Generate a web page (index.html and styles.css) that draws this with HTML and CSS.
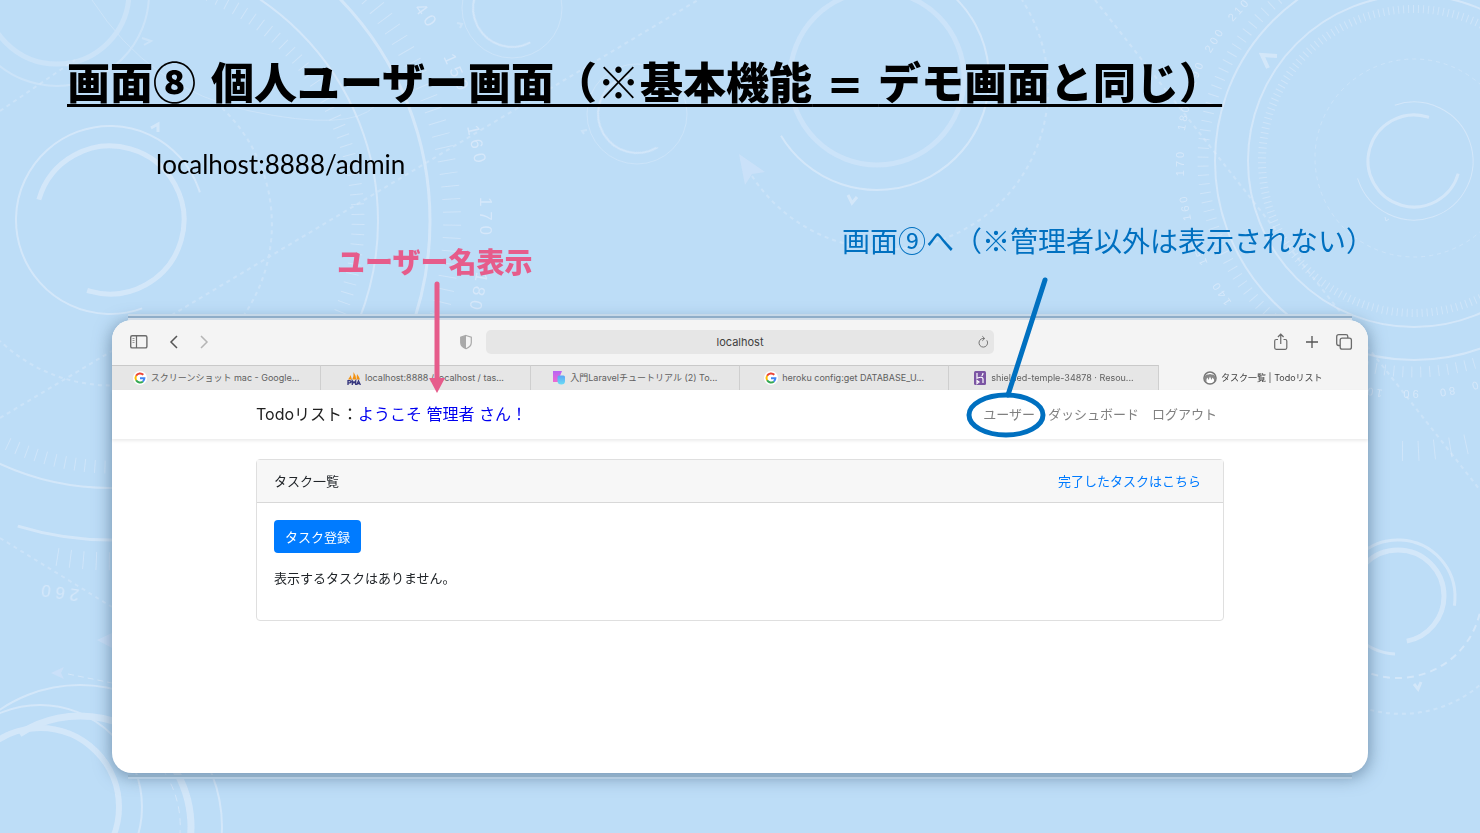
FILE: index.html
```html
<!DOCTYPE html>
<html lang="ja">
<head>
<meta charset="utf-8">
<meta name="viewport" content="width=device-width, initial-scale=1">
<title>画面⑧ 個人ユーザー画面</title>
<link rel="stylesheet" href="styles.css">
</head>
<body>
<main class="slide">
  <svg class="backdrop" viewBox="0 0 1480 833" preserveAspectRatio="xMidYMid slice" aria-hidden="true">
    <g class="faint">
      <circle cx="57" cy="-6" r="92" stroke-width="2"/>
      <circle cx="57" cy="-8" r="72" stroke-width="5"/>
      <path d="M92 0Q150 90 250 111T375 106" stroke-width="1"/>
      <circle cx="512" cy="8" r="50" stroke-width="1"/>
      <circle cx="637" cy="114" r="50" stroke-width="1"/>
      <circle cx="877" cy="78" r="87" stroke-width="5"/>
      <path d="M460 28L462 24L457 23M142 38L151 41L144 45M584 134L582 131L587 130" stroke-width="2"/>
    </g>
    <g class="dots">
      <path d="M0 111L75 60M0 418L698 0M0 538L112 607M1095 0L1480 490"/>
      <path d="M222 108A160 160 0 0 1 0 341M752 176A158 158 0 0 0 1022 0"/>
      <circle cx="1414" cy="158" r="99" stroke-width="1"/>
      <path d="M1300 660A122 122 0 0 0 1480 685"/>
    </g>
    <g class="line">
      <circle cx="110" cy="220" r="94" stroke-width="2" pathLength="360" stroke-dasharray="273 87" transform="rotate(70 110 220)"/>
      <circle cx="110" cy="220" r="74" stroke-width="5" pathLength="360" stroke-dasharray="272 88" transform="rotate(196 110 220)"/>
      <circle cx="111" cy="221" r="267" stroke-width="2" pathLength="360" stroke-dasharray="210 150" transform="rotate(-90 111 221)"/>
      <circle cx="111" cy="221" r="319" stroke-width="3" pathLength="360" stroke-dasharray="197 163" transform="rotate(-90 111 221)"/>
      <path d="M151 128L158 124L158 132" stroke-width="3"/>
      <circle cx="512" cy="8" r="39" stroke-width="2" pathLength="360" stroke-dasharray="200 160" transform="rotate(62 512 8)"/>
      <circle cx="637" cy="114" r="39" stroke-width="2" pathLength="360" stroke-dasharray="200 160" transform="rotate(59 637 114)"/>
      <circle cx="877" cy="78" r="112" stroke-width="2" pathLength="360" stroke-dasharray="199 161" transform="rotate(-50 877 78)"/>
      <path d="M848 195L852 203L857 197" stroke-width="3"/>
      <circle cx="1414" cy="161" r="199" stroke-width="2"/>
      <circle cx="1414" cy="161" r="166" stroke-width="2"/>
      <circle cx="1414" cy="161" r="59" stroke-width="1" pathLength="360" stroke-dasharray="272 88" transform="rotate(251 1414 161)"/>
      <circle cx="1414" cy="161" r="46" stroke-width="3" pathLength="360" stroke-dasharray="273 87" transform="rotate(16 1414 161)"/>
      <path d="M1277 56L1262 55L1268 68" stroke-width="4"/>
      <path d="M1385 217L1386 221L1389 219" stroke-width="1"/>
      <circle cx="1398" cy="597" r="57" stroke-width="3" pathLength="360" stroke-dasharray="276 84" transform="rotate(93 1398 597)"/>
      <circle cx="1398" cy="596" r="46" stroke-width="5" pathLength="360" stroke-dasharray="259 101" transform="rotate(180 1398 596)"/>
      <path d="M1350 663A84 84 0 0 0 1480 612" stroke-width="2" stroke-dasharray="7 5"/>
      <path d="M1414 684L1418 689L1421 682" stroke-width="3"/>
      <circle cx="40" cy="807" r="79" stroke-width="6"/>
      <circle cx="40" cy="807" r="102" stroke-width="2"/>
      <circle cx="80" cy="827" r="142" stroke-width="2"/>
      <circle cx="80" cy="827" r="111" stroke-width="7" pathLength="360" stroke-dasharray="150 210" transform="rotate(237 80 827)"/>
      <path d="M165 773A100 100 0 0 1 180 833" stroke-width="1" stroke-dasharray="7 5"/>
      <path d="M68 674L112 683" stroke-width="1" stroke-dasharray="6 4"/>
    </g>
    <g class="ticks">
      <path d="M111 -25A246 246 0 1 1 0 440" stroke-width="13" stroke-dasharray="1 9"/>
      <path d="M300 -62A340 340 0 0 1 52 556" stroke-width="18" stroke-dasharray="1 12"/>
      <circle cx="1414" cy="161" r="211" stroke-width="11" stroke-dasharray="1 8"/>
      <circle cx="1414" cy="161" r="152" stroke-width="8" stroke-dasharray="1 4"/>
      <path d="M1402 451A290 290 0 0 0 1480 441" stroke-width="20" stroke-dasharray="1 15"/>
    </g>
    <g class="arrowheads">
      <path d="M739 154L765 172L752 174L745 185Z"/>
      <path d="M51 673L64 667L61 673L64 679Z"/>
      <path d="M97 640L112 633V648Z"/>
    </g>
    <g class="dial dial-large">
      <text transform="translate(421 18) rotate(54)">4 0</text>
      <text transform="translate(451 74) rotate(66)">1 5 0</text>
      <text transform="translate(471 145) rotate(78)">1 6 0</text>
      <text transform="translate(480 216) rotate(90)">1 7 0</text>
      <text transform="translate(473 290) rotate(101)">1 8 0</text>
      <text transform="translate(61 587) rotate(188)">2 6 0</text>
    </g>
    <g class="dial dial-small">
      <text transform="translate(1241 13) rotate(-48)">2 1 0</text>
      <text transform="translate(1217 43) rotate(-58)">2 0 0</text>
      <text transform="translate(1199 76) rotate(-68)">1 9 0</text>
      <text transform="translate(1187 119) rotate(-79)">1 8 0</text>
      <text transform="translate(1184 164) rotate(-90)">1 7 0</text>
      <text transform="translate(1189 208) rotate(-101)">1 6 0</text>
      <text transform="translate(1203 252) rotate(-113)">1 5 0</text>
      <text transform="translate(1225 292) rotate(-124)">1 4 0</text>
      <text transform="translate(1371 388) rotate(-170)">1 0 0</text>
      <text transform="translate(1411 390) rotate(180)">9 0</text>
      <text transform="translate(1447 388) rotate(171)">8 0</text>
      <text transform="translate(1474 382) rotate(162)">0</text>
    </g>
  </svg>

  <header class="heading">
    <h1 class="title">画面⑧<span class="latin"> </span>個人ユーザー画面（※基本機能<span class="latin"> = </span>デモ画面と同じ）</h1>
    <p class="address-note">localhost:8888/admin</p>
  </header>

  <div class="callouts">
    <p class="callout callout-pink">ユーザー名表示
      <svg class="pointer" viewBox="0 0 16 112" aria-hidden="true"><path d="M8 3V98" stroke="#e65c8b" stroke-width="5" stroke-linecap="round"/><path d="M0 97H16L8 112Z" fill="#e65c8b"/></svg>
    </p>
    <p class="callout callout-blue">画面⑨へ（※管理者以外は表示されない）</p>
  </div>

  <section class="window">
    <div class="toolbar">
      <div class="tools tools-left">
        <button class="tool" aria-label="サイドバー"><svg width="20" height="16" viewBox="0 0 20 16"><g fill="none" stroke="#6b6b6b"><rect x="1.7" y="1.7" width="16.2" height="12.2" rx="1.5" stroke-width="1.4"/><path d="M7.5 2v12" stroke-width="1.2"/><path d="M3.5 4.5h2M3.5 6.5h2M3.5 8.500h2" stroke="#999"/></g></svg></button>
        <button class="tool" aria-label="戻る"><svg width="10" height="16" viewBox="0 0 10 16"><path d="M8 2L2 8L8 14" fill="none" stroke="#555" stroke-width="1.5"/></svg></button>
        <button class="tool" aria-label="進む"><svg width="10" height="16" viewBox="0 0 10 16"><path d="M2 2L8 8L2 14" fill="none" stroke="#b5b5b5" stroke-width="1.5"/></svg></button>
        <button class="tool tool-shield" aria-label="プライバシーレポート"><svg width="14" height="16" viewBox="0 0 14 16"><path d="M7 1.500L12.300 3.300V8.500C12.300 11.500 10 13.500 7 14.700C4 13.500 1.700 11.500 1.700 8.500V3.300Z" fill="none" stroke="#a9a9a9" stroke-width="1.200"/><path d="M7 1.500V14.700C4 13.500 1.700 11.500 1.700 8.500V3.300Z" fill="#a9a9a9"/></svg></button>
      </div>
      <div class="address">
        <input class="address-input" type="text" value="localhost" aria-label="アドレス">
        <button class="reload" aria-label="再読み込み"><svg width="12" height="14" viewBox="0 0 12 14"><path d="M9.800 5.300A4.300 4.300 0 1 1 6 3.500H7.500M5.300 1.200L7.700 3.500L5.300 5.800" fill="none" stroke="#777"/></svg></button>
      </div>
      <div class="tools tools-right">
        <button class="tool" aria-label="共有"><svg width="16" height="18" viewBox="0 0 16 18"><path d="M5 6.500H3.200Q1.700 6.500 1.700 8V14.800Q1.700 16.300 3.200 16.300H12.300Q13.800 16.300 13.800 14.800V8Q13.800 6.500 12.300 6.500H10.500M7.750 11V1.500M4.900 4L7.750 1.200L10.600 4" fill="none" stroke="#6b6b6b" stroke-width="1.200"/></svg></button>
        <button class="tool" aria-label="新規タブ"><svg width="14" height="14" viewBox="0 0 14 14"><path d="M7 1V13M1 7H13" stroke="#555" stroke-width="1.300"/></svg></button>
        <button class="tool" aria-label="タブの概要"><svg width="18" height="18" viewBox="0 0 18 18"><g fill="none" stroke="#6b6b6b" stroke-width="1.300"><rect x="5.200" y="5.200" width="11.200" height="11" rx="2"/><path d="M5 12.500H3.700Q1.700 12.500 1.700 10.500V3.700Q1.700 1.700 3.700 1.700H11Q12.800 1.700 12.800 3.500V5"/></g></svg></button>
      </div>
    </div>

    <div class="tabs">
      <button class="tab"><svg class="favicon" viewBox="0 0 14 14"><circle cx="7" cy="7" r="7" fill="#fff"/><g fill="none" stroke-width="2"><path d="M10.300 3.800A4.500 4.500 0 0 0 3.100 4.800" stroke="#ea4335"/><path d="M3.100 4.800A4.500 4.500 0 0 0 3.100 9.300" stroke="#fbbc05"/><path d="M3.100 9.300A4.500 4.500 0 0 0 9.900 10.400" stroke="#34a853"/><path d="M9.900 10.400A4.500 4.500 0 0 0 11.400 7.200H7" stroke="#4285f4"/></g></svg><span class="tab-label">スクリーンショット mac - Google...</span></button>
      <button class="tab"><svg class="favicon" viewBox="0 0 14 14"><path d="M1 8.500Q3 6.500 3.500 4L5 8.500ZM5.300 8.500Q7 5 6.500 1Q9 4.500 9.200 8.500ZM9.500 8.500L10 3Q12 5.500 13 8.500Z" fill="#f29111"/><g fill="none" stroke="#34347c" stroke-width="1.300"><path d="M1 14V9.700H2.800Q4 9.700 4 10.700T2.800 11.800H1M5.300 14V9.800L7 12L8.700 9.800V14M9.700 14L11.500 9.800L13.400 14M10.300 12.700H13"/></g></svg><span class="tab-label">localhost:8888 / localhost / tas...</span></button>
      <button class="tab"><svg class="favicon" viewBox="0 0 14 14"><defs><linearGradient id="pink" x2="0" y2="1"><stop stop-color="#b666f5"/><stop offset="1" stop-color="#f06ad0"/></linearGradient><linearGradient id="sky" x2="0" y2="1"><stop stop-color="#5ba5f5"/><stop offset="1" stop-color="#6adcf5"/></linearGradient></defs><path d="M1 0H10L8 5V11H1Z" fill="url(#pink)"/><path d="M5.500 6Q5.500 4.500 7 4.500H11.500Q13 4.500 13 6V10Q13 13.500 9.300 13.500T5.500 10Z" fill="url(#sky)"/></svg><span class="tab-label">入門Laravelチュートリアル (2) To...</span></button>
      <button class="tab"><svg class="favicon" viewBox="0 0 14 14"><circle cx="7" cy="7" r="7" fill="#fff"/><g fill="none" stroke-width="2"><path d="M10.300 3.800A4.500 4.500 0 0 0 3.100 4.800" stroke="#ea4335"/><path d="M3.100 4.800A4.500 4.500 0 0 0 3.100 9.300" stroke="#fbbc05"/><path d="M3.100 9.300A4.500 4.500 0 0 0 9.900 10.400" stroke="#34a853"/><path d="M9.900 10.400A4.500 4.500 0 0 0 11.400 7.200H7" stroke="#4285f4"/></g></svg><span class="tab-label">heroku config:get DATABASE_U...</span></button>
      <button class="tab"><svg class="favicon" viewBox="0 0 14 14"><rect x="1" width="12" height="14" rx="1.500" fill="#7b55a3"/><path d="M4 2V7.200Q10 5 10 8V12M10 2Q10 3.500 8.800 5M4 9.500L6 11L4 12.500Z" fill="none" stroke="#fff" stroke-width="1.200"/></svg><span class="tab-label">shielded-temple-34878 · Resou...</span></button>
      <button class="tab tab-active"><svg class="favicon" viewBox="0 0 14 14"><circle cx="7" cy="7" r="6" fill="#fff" stroke="#777" stroke-width="1.600"/><path d="M1.500 9Q1 3 5.500 3.500Q7 2.500 8.500 3.500Q13 3 12.500 9L11 11V8.500L9.500 6.500L8.500 9L7 5.500L5.500 9L4.500 6.500L3.500 8V11Z" fill="#888"/></svg><span class="tab-label">タスク一覧 | Todoリスト</span></button>
    </div>

    <div class="page">
      <nav class="navbar">
        <div class="container navbar-row">
          <p class="brand">Todoリスト：<a class="welcome" href="#">ようこそ 管理者 さん！</a></p>
          <div class="nav-links">
            <a class="nav-link nav-user" href="#">ユーザー<svg class="ring" viewBox="0 0 82 162" aria-hidden="true"><g fill="none" stroke="#0070c0" stroke-width="5"><ellipse cx="40" cy="138" rx="37" ry="20"/><path d="M79 3L42 118" stroke-linecap="round"/></g></svg></a>
            <a class="nav-link" href="#">ダッシュボード</a>
            <a class="nav-link" href="#">ログアウト</a>
          </div>
        </div>
      </nav>
      <div class="container content">
        <article class="card">
          <div class="card-header">
            <h2 class="card-title">タスク一覧</h2>
            <a class="card-link" href="#">完了したタスクはこちら</a>
          </div>
          <div class="card-body">
            <button class="primary">タスク登録</button>
            <p class="empty">表示するタスクはありません。</p>
          </div>
        </article>
      </div>
    </div>
  </section>
</main>
</body>
</html>
```

FILE: styles.css
```css
* {
  box-sizing: border-box;
}

body {
  margin: 0;
  font-family: "Noto Sans CJK JP", sans-serif;
  color: #212529;
}

h1, h2, p {
  margin: 0;
}

button {
  border: 0;
  padding: 0;
  background: none;
  font: inherit;
  color: inherit;
}

a {
  text-decoration: none;
}

svg {
  display: block;
}

.slide {
  position: relative;
  display: flex;
  flex-direction: column;
  min-height: 100vh;
  padding: 50px 112px 60px;
  background: #bdddf7;
  overflow: hidden;
}

/* Decorative dials behind the slide */
.backdrop {
  position: absolute;
  inset: 0;
  width: 100%;
  height: 100%;
}

.backdrop g {
  fill: none;
  stroke: #e6effc;
}

.backdrop .faint {
  opacity: 0.35;
}

.backdrop .line {
  opacity: 0.55;
}

.backdrop .ticks {
  opacity: 0.45;
}

.backdrop .dots {
  opacity: 0.35;
  stroke-width: 2px;
  stroke-dasharray: 4 4;
}

.backdrop .arrowheads {
  fill: #d0e2fa;
  stroke: none;
  opacity: 0.7;
}

.backdrop .dial {
  fill: #e6effc;
  stroke: none;
  opacity: 0.6;
  font-family: "Liberation Sans", sans-serif;
  text-anchor: middle;
}

.dial-large {
  font-size: 17px;
}

.dial-small {
  font-size: 11px;
}

.heading,
.callouts,
.window {
  position: relative;
}

.heading {
  margin: 0 -45px;
}

.title {
  font-size: 43px;
  line-height: 60px;
  font-weight: 900;
  color: #000;
  text-decoration: underline;
  text-decoration-thickness: 3px;
  text-underline-offset: 5px;
  text-decoration-skip-ink: none;
}

.latin {
  font-family: "DejaVu Sans", sans-serif;
  font-weight: 700;
  line-height: 1;
}

.address-note {
  margin: 38px 0 0 89px;
  font-family: Lato, sans-serif;
  font-size: 26px;
  line-height: 32px;
  color: #000;
}

.callouts {
  z-index: 1;
  display: flex;
  align-items: flex-start;
  justify-content: space-between;
  margin: 40px -6px 39px 225px;
  font-size: 28px;
  line-height: 40px;
}

.callout-pink {
  position: relative;
  margin-top: 21px;
  font-weight: 900;
  color: #e65c8b;
}

.pointer {
  position: absolute;
  left: 92px;
  top: 100%;
  width: 16px;
  height: 112px;
}

.callout-blue {
  color: #0070c0;
}

/* Browser window */
.window {
  flex: 1;
  display: flex;
  flex-direction: column;
  border-radius: 20px;
  background: #fff;
  box-shadow: 0 3px 18px rgba(50, 80, 110, 0.6);
}

.window::before,
.window::after {
  content: "";
  position: absolute;
  left: 16px;
  right: 16px;
  height: 2px;
}

.window::before {
  top: -4px;
  background: #8fadc8;
  box-shadow: 0 -2px #c6d8e8, 0 2px #d3dee9;
}

.window::after {
  bottom: -4px;
  background: #8fadc5;
  box-shadow: 0 2px #b3cbe0;
}

.toolbar {
  display: grid;
  grid-template-columns: 1fr minmax(0, 508px) 1fr;
  align-items: center;
  height: 45px;
  padding-bottom: 1px;
  border-radius: 20px 20px 0 0;
  background: #f4f4f4;
}

.tools {
  display: flex;
  align-items: center;
}

.tools-left {
  gap: 20px;
  padding: 0 13px 0 17px;
}

.tool-shield {
  margin-left: auto;
}

.tools-right {
  gap: 16px;
  justify-content: flex-end;
  padding-right: 15px;
}

.address {
  display: flex;
  align-items: center;
  height: 24px;
  padding: 0 5px;
  border-radius: 5px;
  background: #e6e6e6;
}

.address-input {
  flex: 1;
  min-width: 0;
  padding: 0 0 0 12px;
  border: 0;
  background: none;
  font-family: Inter, sans-serif;
  font-size: 11px;
  text-align: center;
  color: #404040;
}

.tabs {
  display: grid;
  grid-template-columns: repeat(6, minmax(0, 1fr));
  height: 25px;
  background: #f4f4f4;
}

.tab {
  display: flex;
  align-items: center;
  justify-content: center;
  gap: 4px;
  border-top: 1px solid #c9c9c9;
  border-right: 1px solid #cfcfcf;
  background: #e6e6e6;
  font-family: Inter, "Noto Sans CJK JP", sans-serif;
  font-size: 9px;
  line-height: 16px;
  white-space: nowrap;
  color: #606060;
}

.tab-active {
  border-color: transparent;
  background: #f4f4f4;
  color: #404040;
}

.favicon {
  flex: none;
  width: 14px;
  height: 14px;
}

.container {
  width: 100%;
  max-width: 968px;
  margin: 0 auto;
}

.navbar {
  height: 49px;
  background: #fff;
  box-shadow: 0 2px 3px rgba(0, 0, 0, 0.08);
}

.navbar-row {
  display: flex;
  align-items: center;
  justify-content: space-between;
  height: 48px;
}

.brand {
  font-family: Inter, "Noto Sans CJK JP", sans-serif;
  font-size: 16px;
  line-height: 24px;
  color: #212121;
}

.welcome {
  color: #0000f0;
}

.nav-links {
  display: flex;
  gap: 13px;
  padding-right: 7px;
}

.nav-link {
  font-size: 13px;
  line-height: 20px;
  color: #808080;
}

.nav-user {
  position: relative;
}

.ring {
  position: absolute;
  left: -17px;
  bottom: -15px;
  width: 82px;
  height: 162px;
}

.content {
  padding: 20px 0;
}

.card {
  border: 1px solid #dfdfdf;
  border-radius: 4px;
  font-size: 13px;
  line-height: 20px;
}

.card-header {
  display: flex;
  align-items: center;
  justify-content: space-between;
  height: 43px;
  padding: 0 22px 0 17px;
  border-bottom: 1px solid #d8d8d8;
  background: #f7f7f7;
}

.card-title {
  font-size: 13px;
  font-weight: 400;
}

.card-link {
  color: #007bff;
}

.card-body {
  padding: 17px 17px 32px;
}

.primary {
  height: 33px;
  padding: 0 11px;
  border-radius: 4px;
  background: #007bff;
  color: #fff;
}

.empty {
  margin-top: 15px;
}
```
